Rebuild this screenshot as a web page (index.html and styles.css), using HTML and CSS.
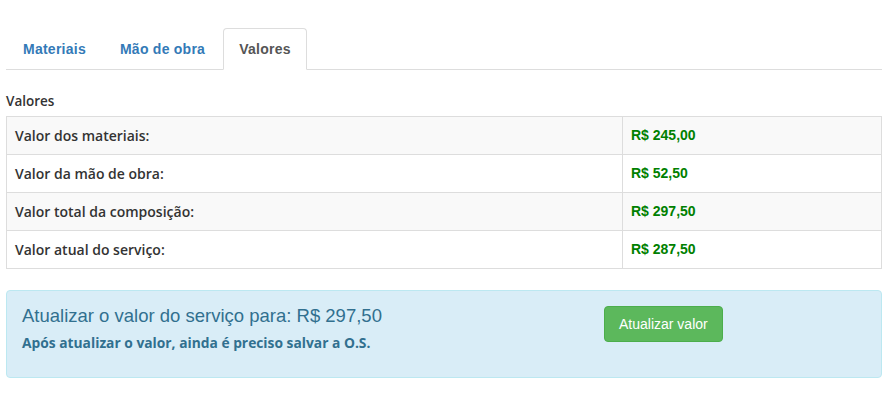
FILE: index.html
```html
<!DOCTYPE html>
<html lang="pt-BR">
<head>
    <meta charset="UTF-8">
    <meta name="viewport" content="width=device-width, initial-scale=1.0">
    <title>Composição - Valores</title>
    <link rel="stylesheet" href="styles.css">
</head>
<body>

<div class="page">
    <ul class="nav-tabs">
        <li><a href="#">Materiais</a></li>
        <li><a href="#">Mão de obra</a></li>
        <li class="active"><a href="#">Valores</a></li>
    </ul>

    <div class="tab-content">
        <label class="section-label">Valores</label>
        <table class="values-table">
            <tbody>
                <tr>
                    <td class="name">Valor dos materiais:</td>
                    <td class="money">R$ 245,00</td>
                </tr>
                <tr>
                    <td class="name">Valor da mão de obra:</td>
                    <td class="money">R$ 52,50</td>
                </tr>
                <tr>
                    <td class="name">Valor total da composição:</td>
                    <td class="money">R$ 297,50</td>
                </tr>
                <tr>
                    <td class="name">Valor atual do serviço:</td>
                    <td class="money">R$ 287,50</td>
                </tr>
            </tbody>
        </table>

        <div class="alert-info">
            <div class="alert-text">
                <h4>Atualizar o valor do serviço para: R$ 297,50</h4>
                <p>Após atualizar o valor, ainda é preciso salvar a O.S.</p>
            </div>
            <div class="alert-action">
                <button class="btn-success">Atualizar valor</button>
            </div>
        </div>
    </div>
</div>

</body>
</html>
```

FILE: styles.css
```css
body {
    font-family: "Liberation Sans", Arial, sans-serif;
    font-size: 14px;
    line-height: 20px;
    color: #333;
    background-color: #fff;
    margin: 0;
    padding: 0;
}
.page {
    padding: 28px 8px 0 6px;
}
.nav-tabs {
    list-style: none;
    margin: 0;
    padding: 0 0 0 1px;
    display: flex;
    border-bottom: 1px solid #ddd;
}
.nav-tabs li {
    margin-right: 2px;
    margin-bottom: -1px;
}
.nav-tabs a {
    display: block;
    padding: 10px 15px;
    border: 1px solid transparent;
    border-radius: 4px 4px 0 0;
    color: #337ab7;
    font-weight: bold;
    letter-spacing: 0.25px;
    text-decoration: none;
}
.nav-tabs .active a {
    color: #555;
    background-color: #fff;
    border-color: #ddd #ddd transparent;
}
.section-label {
    display: block;
    margin: 21px 0 5px;
    font-family: "Open Sans", sans-serif;
    font-weight: 600;
    font-size: 13.5px;
}
.values-table {
    width: 100%;
    border-collapse: collapse;
    margin-bottom: 21px;
}
.values-table td {
    border: 1px solid #ddd;
    padding: 8px;
    line-height: 21px;
}
.values-table tr:nth-child(odd) td {
    background-color: #f9f9f9;
}
.values-table .name {
    font-family: "Open Sans", sans-serif;
    font-weight: 600;
    font-size: 14px;
}
.values-table .money {
    width: 242px;
    color: #008000;
    font-weight: bold;
    font-size: 14px;
}
.alert-info {
    display: flex;
    padding: 15px;
    background-color: #d9edf7;
    border: 1px solid #bce8f1;
    border-radius: 4px;
    color: #31708f;
}
.alert-text {
    width: 582px;
}
.alert-text h4 {
    margin: 0 0 7px;
    font-size: 18.5px;
    font-weight: normal;
    line-height: 20px;
}
.alert-text p {
    margin: 0 0 9px;
    font-family: "Open Sans", sans-serif;
    font-weight: 700;
    font-size: 13.8px;
}
.btn-success {
    font-family: "Liberation Sans", Arial, sans-serif;
    font-size: 14px;
    line-height: 20px;
    padding: 7px 14px;
    color: #fff;
    background-color: #5cb85c;
    border: 1px solid #4cae4c;
    border-radius: 4px;
    cursor: pointer;
}
```
